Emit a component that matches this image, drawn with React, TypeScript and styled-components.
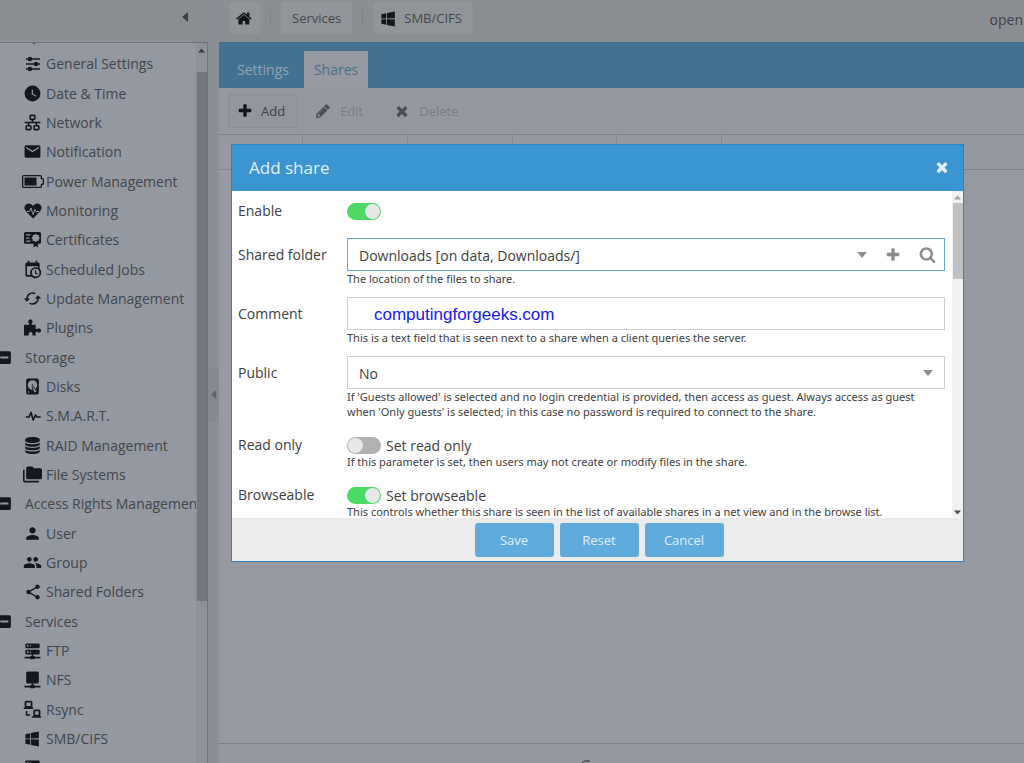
import React from 'react';
import styled, { createGlobalStyle, css } from 'styled-components';
import { MdPerson, MdPeople, MdShare } from 'react-icons/md';

const GlobalStyle = createGlobalStyle`
  *, *::before, *::after { box-sizing: border-box; }
  html, body, #root { height: 100%; }
  body {
    margin: 0;
    overflow: hidden;
    font-family: 'Open Sans', 'Noto Sans', sans-serif;
    font-size: 14px;
    color: #404040;
    background: #8b8f93;
  }
  button, input, select { font: inherit; color: inherit; margin: 0; }
  svg { display: block; flex: none; }
`;

/* ---------- icons ---------- */

const paths = {
  clock:
    'M12,2A10,10 0 0,0 2,12A10,10 0 0,0 12,22A10,10 0 0,0 22,12A10,10 0 0,0 12,2M16.2,16.2L11,13V7H12.5V12.2L17,14.9L16.2,16.2Z',
  lan: 'M10,2C8.89,2 8,2.89 8,4V7C8,8.11 8.89,9 10,9H11V11H2V13H6V15H5C3.89,15 3,15.89 3,17V20C3,21.11 3.89,22 5,22H9C10.11,22 11,21.11 11,20V17C11,15.89 10.11,15 9,15H8V13H16V15H15C13.89,15 13,15.89 13,17V20C13,21.11 13.89,22 15,22H19C20.11,22 21,21.11 21,20V17C21,15.89 20.11,15 19,15H18V13H22V11H13V9H14C15.11,9 16,8.11 16,7V4C16,2.89 15.11,2 14,2H10M10,4H14V7H10V4M5,17H9V20H5V17M15,17H19V20H15V17Z',
  email:
    'M20,8L12,13L4,8V6L12,11L20,6M20,4H4C2.89,4 2,4.89 2,6V18A2,2 0 0,0 4,20H20A2,2 0 0,0 22,18V6C22,4.89 21.1,4 20,4Z',
  calendar:
    'M15,13H16.5V15.82L18.94,17.23L18.19,18.53L15,16.69V13M19,8H5V19H9.67C9.24,18.09 9,17.07 9,16A7,7 0 0,1 16,9C17.07,9 18.09,9.24 19,9.67V8M5,21C3.89,21 3,20.1 3,19V5C3,3.89 3.89,3 5,3H6V1H8V3H16V1H18V3H19A2,2 0 0,1 21,5V11.1C22.24,12.36 23,14.09 23,16A7,7 0 0,1 16,23C14.09,23 12.36,22.24 11.1,21H5M16,11.15A4.85,4.85 0 0,0 11.15,16C11.15,18.68 13.32,20.85 16,20.85A4.85,4.85 0 0,0 20.85,16C20.85,13.32 18.68,11.15 16,11.15Z',
  cached:
    'M19,8L15,12H18A6,6 0 0,1 12,18C11,18 10.03,17.75 9.2,17.3L7.74,18.76C8.97,19.54 10.43,20 12,20A8,8 0 0,0 20,12H23M6,12A6,6 0 0,1 12,6C13,6 13.97,6.25 14.8,6.7L16.26,5.24C15.03,4.46 13.57,4 12,4A8,8 0 0,0 4,12H1L5,16L9,12',
  harddisk:
    'M6,2H18A2,2 0 0,1 20,4V20A2,2 0 0,1 18,22H6A2,2 0 0,1 4,20V4A2,2 0 0,1 6,2M12,4A6,6 0 0,0 6,10C6,13.31 8.69,16 12.1,16L11.22,13.77C10.95,13.29 11.11,12.68 11.59,12.4L12.45,11.9C12.93,11.63 13.54,11.79 13.82,12.27L15.74,14.69C17.12,13.59 18,11.9 18,10A6,6 0 0,0 12,4M12,9A1,1 0 0,1 13,10A1,1 0 0,1 12,11A1,1 0 0,1 11,10A1,1 0 0,1 12,9M7,18A1,1 0 0,0 6,19A1,1 0 0,0 7,20A1,1 0 0,0 8,19A1,1 0 0,0 7,18M12.09,13.27L14.58,19.58L17.17,18.08L12.95,12.77L12.09,13.27Z',
  folders:
    'M22,4H14L12,2H6A2,2 0 0,0 4,4V16A2,2 0 0,0 6,18H22A2,2 0 0,0 24,16V6A2,2 0 0,0 22,4M2,6H0V11H0V20A2,2 0 0,0 2,22H20V20H2V6Z',
  server:
    'M13,19H14A1,1 0 0,1 15,20H22V22H15A1,1 0 0,1 14,23H10A1,1 0 0,1 9,22H2V20H9A1,1 0 0,1 10,19H11V17H4A1,1 0 0,1 3,16V12A1,1 0 0,1 4,11H20A1,1 0 0,1 21,12V16A1,1 0 0,1 20,17H13V19M4,3H20A1,1 0 0,1 21,4V8A1,1 0 0,1 20,9H4A1,1 0 0,1 3,8V4A1,1 0 0,1 4,3M9,7H10V5H9V7M9,15H10V13H9V15M5,5V7H7V5H5M5,13V15H7V13H5Z',
  nfs: 'M6,2H18Q20,2 20,4V15Q20,17 18,17H13V19H14A1,1 0 0,1 15,20H22V22H15A1,1 0 0,1 14,23H10A1,1 0 0,1 9,22H2V20H9A1,1 0 0,1 10,19H11V17H6Q4,17 4,15V4Q4,2 6,2Z',
  windows:
    'M3,12V6.75L9,5.43V11.91L3,12M20,3V11.75L10,11.9V5.21L20,3M3,13L9,13.09V19.9L3,18.75V13M20,13.25V22L10,20.09V13.1L20,13.25Z',
  minusBox:
    'M19,3H5A2,2 0 0,0 3,5V19A2,2 0 0,0 5,21H19A2,2 0 0,0 21,19V5A2,2 0 0,0 19,3M17.5,13.5H6V10.5H17.5V13.5Z',
  rsync:
    'M4,1H10A2,2 0 0,1 12,3V8A1,1 0 0,1 11,9.5H13V11.5H1V9.5H3A2,2 0 0,1 2,8V3A2,2 0 0,1 4,1M4.3,3.3V7.5H9.7V3.3H4.3M15,12H20A2,2 0 0,1 22,14V18.5A2,2 0 0,1 21,20.5H23V22.5H11V20.5H14A2,2 0 0,1 13,18.5V14A2,2 0 0,1 15,12M15.3,14.3V18.5H19.7V14.3H15.3M3.5,14H5.5V18H9V20H3.5Z',
};

const faPaths = {
  home: 'M1408 992v480q0 26-19 45t-45 19h-384v-384h-256v384h-384q-26 0-45-19t-19-45v-480q0-1 .5-3t.5-3l575-474 575 474q1 2 1 6zm223-69l-62 74q-8 9-21 11h-3q-13 0-21-7l-692-577-692 577q-12 8-24 7-13-2-21-11l-62-74q-8-10-7-23.5t11-21.5l719-599q32-26 76-26t76 26l244 204v-195q0-14 9-23t23-9h192q14 0 23 9t9 23v408l219 182q10 8 11 21.5t-7 23.5z',
  times:
    'M1490 1322q0 40-28 68l-136 136q-28 28-68 28t-68-28l-294-294-294 294q-28 28-68 28t-68-28l-136-136q-28-28-28-68t28-68l294-294-294-294q-28-28-28-68t28-68l136-136q28-28 68-28t68 28l294 294 294-294q28-28 68-28t68 28l136 136q28 28 28 68t-28 68l-294 294 294 294q28 28 28 68z',
  plus: 'M1600 736v192q0 40-28 68t-68 28h-416v416q0 40-28 68t-68 28h-192q-40 0-68-28t-28-68v-416h-416q-40 0-68-28t-28-68v-192q0-40 28-68t68-28h416v-416q0-40 28-68t68-28h192q40 0 68 28t28 68v416h416q40 0 68 28t28 68z',
  pencil:
    'M491 1536l91-91-235-235-91 91v107h128v128h107zm523-928q0-22-22-22-10 0-17 7l-542 542q-7 7-7 17 0 22 22 22 10 0 17-7l542-542q7-7 7-17zm-54-192l416 416-832 832h-416v-416zm683 96q0 53-37 90l-166 166-416-416 166-165q36-38 90-38 53 0 91 38l235 234q37 39 37 91z',
  search:
    'M1216 832q0-185-131.5-316.5t-316.5-131.5-316.5 131.5-131.5 316.5 131.5 316.5 316.5 131.5 316.5-131.5 131.5-316.5zm512 832q0 52-38 90t-90 38q-54 0-90-38l-343-342q-179 124-399 124-143 0-273.5-55.5t-225-150-150-225-55.5-273.5 55.5-273.5 150-225 225-150 273.5-55.5 273.5 55.5 225 150 150 225 55.5 273.5q0 220-124 399l343 343q37 37 37 90z',
  database:
    'M896 768q237 0 443-43t325-127v170q0 69-103 128t-280 93.5-385 34.5-385-34.5-280-93.5-103-128v-170q119 84 325 127t443 43zm0 768q237 0 443-43t325-127v170q0 69-103 128t-280 93.5-385 34.5-385-34.5-280-93.5-103-128v-170q119 84 325 127t443 43zm0-384q237 0 443-43t325-127v170q0 69-103 128t-280 93.5-385 34.5-385-34.5-280-93.5-103-128v-170q119 84 325 127t443 43zm0-1152q208 0 385 34.5t280 93.5 103 128v128q0 69-103 128t-280 93.5-385 34.5-385-34.5-280-93.5-103-128v-128q0-69 103-128t280-93.5 385-34.5z',
};

const Mdi = ({ name, size = 19 }: { name: keyof typeof paths; size?: number }) => (
  <svg width={size} height={size} viewBox="0 0 24 24" fill="currentColor" fillRule="evenodd" aria-hidden="true">
    <path d={paths[name]} />
  </svg>
);

const Fa = ({ name, size = 16 }: { name: keyof typeof faPaths; size?: number }) => (
  <svg width={size} height={size} viewBox="0 0 1792 1792" fill="currentColor" aria-hidden="true">
    <path d={faPaths[name]} />
  </svg>
);

const Sliders = () => (
  <svg width="16" height="16" viewBox="0 0 16 16" fill="currentColor" aria-hidden="true">
    <path d="M1 2.300h14v1.400H1zM1 7.300h14v1.400H1zM1 12.300h14v1.400H1z" />
    <circle cx="5" cy="3" r="2.200" />
    <circle cx="11" cy="8" r="2.200" />
    <circle cx="5" cy="13" r="2.200" />
  </svg>
);

const Battery = () => (
  <svg width="22" height="13" viewBox="0 0 22 13" fill="currentColor" aria-hidden="true">
    <path
      fillRule="evenodd"
      d="M1.500 0h17Q20 0 20 1.500V3h.5Q22 3 22 4.500v4Q22 10 20.500 10H20v1.500Q20 13 18.500 13h-17Q0 13 0 11.500v-10Q0 0 1.500 0zM1.300 1.300v10.400h17.400V8.700h2V4.300h-2v-3z"
    />
    <path d="M2.500 2.500h12v8h-12z" />
  </svg>
);

const HeartBeat = () => (
  <svg width="18" height="16" viewBox="0 0 18 16" aria-hidden="true">
    <path
      fill="currentColor"
      d="M9 15.500 2 8.500Q-.5 5.500 1 2.700 2.500.5 5 .6 7.500.8 9 3 10.500.8 13 .6q2.500-.1 4 2.100 1.500 2.800-1 5.800z"
    />
    <path d="M3 8.500h2.500L7 5l2 6.500 2-5 1 2h3" fill="none" stroke="#9498a0" strokeWidth="1" />
  </svg>
);

const Certificate = () => (
  <svg width="17" height="17" viewBox="0 0 16 16" aria-hidden="true">
    <path
      fill="currentColor"
      fillRule="evenodd"
      d="M1.500 1h13Q16 1 16 2.500v8q0 1.500-1.500 1.500H13v3.500L11 14l-2 1.500V12H1.500Q0 12 0 10.500v-8Q0 1 1.500 1zM2 3v1.200h4V3zm0 3v1.200h3V6zm0 3v1.200h4V9zM11 2.500l1.200 1.200 1.800.1-.1 1.700L15 6.600l-1.200 1.200-.1 1.600-1.600-.1L11 10.500 9.800 9.300l-1.700.1.100-1.700L7 6.600l1.200-1.200V3.700l1.700.1z"
    />
  </svg>
);

const Puzzle = () => (
  <svg width="17" height="17" viewBox="0 0 16 16" fill="currentColor" aria-hidden="true">
    <path d="M0 5.500h4.700V4a2 2 0 1 1 2.600 0v1.500H11v4h1.500a2 2 0 1 1 0 2.600H11v3.400H8v-1.500a1.800 1.800 0 0 0-3.600 0v1.500H0z" />
  </svg>
);

const Pulse = () => (
  <svg width="16" height="16" viewBox="0 0 16 16" aria-hidden="true">
    <path
      d="M1.500 9h2.500l2-4.500L8.200 12l2.300-5 1.500 2h3"
      fill="none"
      stroke="currentColor"
      strokeWidth="1.700"
      strokeLinejoin="round"
      strokeLinecap="round"
    />
  </svg>
);

const Caret = ({ dir, size = 10 }: { dir: 'up' | 'down' | 'left'; size?: number }) => {
  const d = { up: 'M0 8 5 2l5 6z', down: 'M0 2h10L5 8z', left: 'M8 0v10L2 5z' }[dir];
  return (
    <svg width={size} height={size} viewBox="0 0 10 10" fill="currentColor" aria-hidden="true">
      <path d={d} />
    </svg>
  );
};

/* ---------- page frame ---------- */

const Page = styled.div`
  display: grid;
  grid-template-columns: 208px 11px minmax(0, 1fr);
  height: 100vh;
  overflow: hidden;
`;

const Sidebar = styled.nav`
  display: flex;
  flex-direction: column;
  min-height: 0;
`;

const SidebarHead = styled.div`
  flex: none;
  display: flex;
  justify-content: flex-end;
  align-items: center;
  height: 42px;
  padding: 0 18px 8px 0;
  background: #8b8f93;
`;

const IconButton = styled.button`
  display: flex;
  align-items: center;
  justify-content: center;
  padding: 0;
  border: 0;
  background: none;
`;

const TreePanel = styled.div`
  flex: 1;
  display: flex;
  min-height: 0;
  border-top: 1px solid #70757a;
  border-right: 1px solid #66777e;
  background: #9498a0;
`;

const TreeClip = styled.div`
  flex: 1;
  min-width: 0;
  overflow: hidden;
`;

const Tree = styled.ul`
  margin: -23px 0 0;
  padding: 0;
  list-style: none;
`;

const TreeItem = styled.li`
  height: 29px;
  &:nth-child(3n) { height: 30px; }
`;

const TreeLink = styled.a<{ $group?: boolean }>`
  display: flex;
  align-items: center;
  height: 100%;
  padding-left: ${p => (p.$group ? 0 : 22)}px;
  color: #42464c;
  text-decoration: none;
  white-space: nowrap;
`;

const TreeIcon = styled.span<{ $group?: boolean }>`
  flex: none;
  display: flex;
  justify-content: ${p => (p.$group ? 'flex-end' : 'center')};
  width: ${p => (p.$group ? 13 : 21)}px;
  margin-right: ${p => (p.$group ? 12 : 3)}px;
  color: #14181c;
`;

const Track = styled.div<{ $dim?: boolean }>`
  flex: none;
  display: flex;
  flex-direction: column;
  align-items: center;
  width: 11px;
  background: ${p => (p.$dim ? '#8e9298' : '#f1f1f1')};
  color: ${p => (p.$dim ? '#363a3f' : '#505050')};
`;

const TrackEnd = styled.span<{ $tall?: boolean; $idle?: boolean }>`
  flex: none;
  display: flex;
  align-items: center;
  height: ${p => (p.$tall ? 29 : 12)}px;
  padding-bottom: ${p => (p.$tall ? 14 : 0)}px;
  ${p => p.$idle && 'color: #a3a3a3;'}
`;

const Thumb = styled.span<{ $dim?: boolean }>`
  flex: none;
  align-self: stretch;
  height: ${p => (p.$dim ? 529 : 76)}px;
  margin-left: 1px;
  background: ${p => (p.$dim ? '#73787e' : '#c1c1c1')};
`;

const Spacer = styled.span`
  flex: 1;
`;

const Splitter = styled.div`
  display: flex;
  align-items: center;
  background: #8b8f95;
`;

const SplitHandle = styled(IconButton)`
  width: 11px;
  height: 54px;
  margin-top: 26px;
  background: #858a8f;
  color: #5f646a;
`;

const Main = styled.main`
  display: flex;
  flex-direction: column;
  min-width: 0;
  min-height: 0;
`;

const Crumbs = styled.header`
  flex: none;
  display: flex;
  align-items: center;
  gap: 10px;
  height: 42px;
  padding: 0 1px 6px 10px;
  background: #8b8f93;
  font-size: 13px;
`;

const Crumb = styled.button<{ $icon?: boolean }>`
  display: flex;
  align-items: center;
  gap: 6px;
  height: 32px;
  padding: 0 11px 0 ${p => (p.$icon ? 6 : 11)}px;
  border: 0;
  border-radius: 3px;
  background: #919599;
  color: #44484c;
  svg { color: #14181c; }
`;

const HomeCrumb = styled(Crumb)`
  padding: 0 7px;
`;

const CrumbRule = styled.span`
  width: 1px;
  height: 17px;
  background: #7f8387;
`;

const Brand = styled.span`
  margin-left: auto;
  font-size: 14px;
  line-height: 20px;
  padding-top: 4px;
  color: #3c4044;
`;

const Tabs = styled.div`
  flex: none;
  display: flex;
  align-items: flex-end;
  height: 46px;
  padding-left: 9px;
  background: #457190;
`;

const Tab = styled.button<{ $on?: boolean }>`
  height: 37px;
  margin-right: ${p => (p.$on ? 0 : 6)}px;
  padding: 0 ${p => (p.$on ? 10 : 9)}px;
  border: 0;
  background: ${p => (p.$on ? '#9699a1' : 'transparent')};
  color: ${p => (p.$on ? '#4a7088' : '#8fa4b6')};
`;

const Toolbar = styled.div`
  flex: none;
  display: flex;
  align-items: center;
  gap: 6px;
  height: 47px;
  padding: 0 9px;
  border-bottom: 1px solid #7f8389;
  background: #9598a0;
`;

const ToolButton = styled.button`
  display: flex;
  align-items: center;
  gap: 8px;
  height: 34px;
  padding: 0 12px 0 8px;
  border: 1px solid #8b8f95;
  border-radius: 3px;
  background: #92959c;
  font-size: 13px;
  color: #3e4246;
  svg { color: #14181c; }
  &:disabled {
    gap: 9px;
    padding: 0 13px 0 10px;
    border-color: transparent;
    background: #94979f;
    color: #7a7e84;
    svg { color: #4a4e53; }
  }
`;

const Grid = styled.table`
  flex: none;
  width: 100%;
  border-collapse: collapse;
  table-layout: fixed;
  background: #9598a0;
`;

const GridHead = styled.th<{ $w?: number }>`
  width: ${p => (p.$w ? `${p.$w}px` : 'auto')};
  height: 34px;
  padding: 0;
  border-right: 1px solid #82868c;
  border-bottom: 1px solid #82868c;
  &:last-child { border-right: 0; }
`;

const GridBody = styled.div`
  flex: 1;
  background: #9699a1;
`;

const Paging = styled.footer`
  flex: none;
  display: flex;
  align-items: flex-start;
  height: 20px;
  overflow: hidden;
  padding: 13px 0 0 359px;
  border-top: 1px solid #7c8086;
  background: #9698a0;
  color: #4a4e53;
`;

/* ---------- dialog ---------- */

const Overlay = styled.div`
  position: absolute;
  inset: 0;
  padding: 144px 60px 0 231px;
`;

const Dialog = styled.section`
  border: 1px solid #3085bf;
  background: #fff;
`;

const DialogHead = styled.header`
  display: flex;
  align-items: center;
  justify-content: space-between;
  height: 46px;
  padding: 0 13px 2px 17px;
  background: #3a95d0;
  color: #e4f1fa;
`;

const DialogTitle = styled.h1`
  margin: 0;
  font-size: 17px;
  font-weight: 400;
`;

const DialogBody = styled.div`
  display: flex;
  height: 327px;
  overflow: hidden;
`;

const Form = styled.form`
  flex: 1;
  min-width: 0;
  display: flex;
  flex-direction: column;
  gap: 11px;
  padding: 5px 7px 0 6px;
`;

const Row = styled.div<{ $toggle?: boolean }>`
  flex: none;
  display: grid;
  grid-template-columns: 109px minmax(0, 1fr);
  ${p =>
    p.$toggle &&
    css`
      min-height: 31px;
      padding-top: 6px;
    `}
`;

const RowLabel = styled.label<{ $toggle?: boolean }>`
  line-height: ${p => (p.$toggle ? 18 : 33)}px;
`;

const Field = styled.div`
  min-width: 0;
`;

const Box = styled.div<{ $focus?: boolean }>`
  display: flex;
  align-items: center;
  height: 33px;
  border: 1px solid ${p => (p.$focus ? '#6ba5d3' : '#cfcfcf')};
  color: #8d8d8d;
`;

const SelectInput = styled.select`
  flex: 1;
  min-width: 0;
  height: 31px;
  padding: 2px 11px 0;
  border: 0;
  outline: 0;
  appearance: none;
  background: none;
  color: #404040;
`;

const Triggers = styled.div`
  display: flex;
  align-items: center;
  gap: 18px;
  padding-right: 8px;
`;

const SingleTrigger = styled(Triggers)`
  padding-right: 11px;
`;

const TextInput = styled.input`
  flex: 1;
  min-width: 0;
  height: 31px;
  padding: 2px 26px 0;
  border: 0;
  outline: 0;
  background: none;
  font-family: 'Liberation Sans', Arial, sans-serif;
  font-size: 17px;
  color: #1420f0;
`;

const Help = styled.p`
  margin: 0;
  font-family: 'Noto Sans', 'Open Sans', sans-serif;
  font-size: 11px;
  line-height: 15px;
`;

const ToggleLabel = styled.label`
  display: flex;
  align-items: center;
  gap: 5px;
  height: 18px;
`;

const Toggle = styled.input`
  appearance: none;
  flex: none;
  width: 34px;
  height: 17px;
  padding: 1px;
  border-radius: 9px;
  background: #b1b1b1;
  &::before {
    content: '';
    display: block;
    width: 15px;
    height: 15px;
    border-radius: 50%;
    background: #e8e8e8;
  }
  &:checked { background: #4cd964; }
  &:checked::before { margin-left: auto; }
`;

const DialogFoot = styled.footer`
  display: flex;
  align-items: center;
  justify-content: center;
  gap: 6px;
  height: 43px;
  padding-left: 3px;
  background: #ebebeb;
`;

const Action = styled.button`
  width: 79px;
  height: 34px;
  border: 0;
  border-radius: 3px;
  background: #5fabde;
  font-size: 13px;
  color: #e2f0fa;
`;

/* ---------- content ---------- */

const treeRows: { text: string; icon?: React.ReactNode; group?: boolean }[] = [
  { text: 'System', group: true },
  { text: 'General Settings', icon: <Sliders /> },
  { text: 'Date & Time', icon: <Mdi name="clock" /> },
  { text: 'Network', icon: <Mdi name="lan" /> },
  { text: 'Notification', icon: <Mdi name="email" /> },
  { text: 'Power Management', icon: <Battery /> },
  { text: 'Monitoring', icon: <HeartBeat /> },
  { text: 'Certificates', icon: <Certificate /> },
  { text: 'Scheduled Jobs', icon: <Mdi name="calendar" /> },
  { text: 'Update Management', icon: <Mdi name="cached" /> },
  { text: 'Plugins', icon: <Puzzle /> },
  { text: 'Storage', group: true },
  { text: 'Disks', icon: <Mdi name="harddisk" /> },
  { text: 'S.M.A.R.T.', icon: <Pulse /> },
  { text: 'RAID Management', icon: <Fa name="database" size={17} /> },
  { text: 'File Systems', icon: <Mdi name="folders" /> },
  { text: 'Access Rights Management', group: true },
  { text: 'User', icon: <MdPerson size={19} /> },
  { text: 'Group', icon: <MdPeople size={19} /> },
  { text: 'Shared Folders', icon: <MdShare size={18} /> },
  { text: 'Services', group: true },
  { text: 'FTP', icon: <Mdi name="server" /> },
  { text: 'NFS', icon: <Mdi name="nfs" /> },
  { text: 'Rsync', icon: <Mdi name="rsync" /> },
  { text: 'SMB/CIFS', icon: <Mdi name="windows" /> },
  { text: 'SNMP', icon: <Mdi name="server" /> },
];

export default function App() {
  return (
    <>
      <GlobalStyle />
      <Page>
        <Sidebar>
          <SidebarHead>
            <IconButton aria-label="Collapse navigation"><Caret dir="left" size={10} /></IconButton>
          </SidebarHead>
          <TreePanel>
            <TreeClip>
              <Tree>
                {treeRows.map(r => (
                  <TreeItem key={r.text}>
                    <TreeLink href="#" $group={r.group}>
                      <TreeIcon $group={r.group}>{r.group ? <Mdi name="minusBox" size={17} /> : r.icon}</TreeIcon>
                      {r.text}
                    </TreeLink>
                  </TreeItem>
                ))}
              </Tree>
            </TreeClip>
            <Track $dim>
              <TrackEnd $tall><Caret dir="up" size={7} /></TrackEnd>
              <Thumb $dim />
            </Track>
          </TreePanel>
        </Sidebar>

        <Splitter>
          <SplitHandle aria-label="Toggle navigation"><Caret dir="left" size={9} /></SplitHandle>
        </Splitter>

        <Main>
          <Crumbs>
            <HomeCrumb aria-label="Home"><Fa name="home" size={17} /></HomeCrumb>
            <CrumbRule />
            <Crumb>Services</Crumb>
            <CrumbRule />
            <Crumb $icon><Mdi name="windows" size={19} /><span>SMB/CIFS</span></Crumb>
            <Brand>open</Brand>
          </Crumbs>
          <Tabs role="tablist">
            <Tab role="tab" aria-selected={false}>Settings</Tab>
            <Tab role="tab" aria-selected $on>Shares</Tab>
          </Tabs>
          <Toolbar>
            <ToolButton><Fa name="plus" />Add</ToolButton>
            <ToolButton disabled><Fa name="pencil" />Edit</ToolButton>
            <ToolButton disabled><Fa name="times" />Delete</ToolButton>
          </Toolbar>
          <Grid aria-label="Shares">
            <thead>
              <tr>
                <GridHead $w={83} />
                <GridHead $w={105} />
                <GridHead $w={105} />
                <GridHead $w={104} />
                <GridHead $w={105} />
                <GridHead />
              </tr>
            </thead>
          </Grid>
          <GridBody />
          <Paging>
            <IconButton aria-label="Refresh"><Mdi name="cached" size={18} /></IconButton>
          </Paging>
        </Main>
      </Page>

      <Overlay>
        <Dialog role="dialog" aria-labelledby="dialog-title">
          <DialogHead>
            <DialogTitle id="dialog-title">Add share</DialogTitle>
            <IconButton aria-label="Close"><Fa name="times" size={16} /></IconButton>
          </DialogHead>
          <DialogBody>
            <Form>
              <Row $toggle>
                <RowLabel $toggle htmlFor="enable">Enable</RowLabel>
                <Field>
                  <ToggleLabel><Toggle type="checkbox" id="enable" defaultChecked /></ToggleLabel>
                </Field>
              </Row>
              <Row>
                <RowLabel htmlFor="folder">Shared folder</RowLabel>
                <Field>
                  <Box $focus>
                    <SelectInput id="folder"><option>Downloads [on data, Downloads/]</option></SelectInput>
                    <Triggers>
                      <Caret dir="down" />
                      <IconButton type="button" aria-label="Create"><Fa name="plus" /></IconButton>
                      <IconButton type="button" aria-label="Search"><Fa name="search" size={17} /></IconButton>
                    </Triggers>
                  </Box>
                  <Help>The location of the files to share.</Help>
                </Field>
              </Row>
              <Row>
                <RowLabel htmlFor="comment">Comment</RowLabel>
                <Field>
                  <Box><TextInput id="comment" defaultValue="computingforgeeks.com" /></Box>
                  <Help>This is a text field that is seen next to a share when a client queries the server.</Help>
                </Field>
              </Row>
              <Row>
                <RowLabel htmlFor="public">Public</RowLabel>
                <Field>
                  <Box>
                    <SelectInput id="public"><option>No</option></SelectInput>
                    <SingleTrigger><Caret dir="down" /></SingleTrigger>
                  </Box>
                  <Help>
                    If 'Guests allowed' is selected and no login credential is provided, then access as guest. Always
                    access as guest
                    <br />
                    when 'Only guests' is selected; in this case no password is required to connect to the share.
                  </Help>
                </Field>
              </Row>
              <Row $toggle>
                <RowLabel $toggle htmlFor="readonly">Read only</RowLabel>
                <Field>
                  <ToggleLabel><Toggle type="checkbox" id="readonly" />Set read only</ToggleLabel>
                  <Help>If this parameter is set, then users may not create or modify files in the share.</Help>
                </Field>
              </Row>
              <Row $toggle>
                <RowLabel $toggle htmlFor="browseable">Browseable</RowLabel>
                <Field>
                  <ToggleLabel><Toggle type="checkbox" id="browseable" defaultChecked />Set browseable</ToggleLabel>
                  <Help>This controls whether this share is seen in the list of available shares in a net view and in the browse list.</Help>
                </Field>
              </Row>
            </Form>
            <Track>
              <TrackEnd $idle><Caret dir="up" size={7} /></TrackEnd>
              <Thumb />
              <Spacer />
              <TrackEnd><Caret dir="down" size={7} /></TrackEnd>
            </Track>
          </DialogBody>
          <DialogFoot>
            <Action>Save</Action>
            <Action>Reset</Action>
            <Action>Cancel</Action>
          </DialogFoot>
        </Dialog>
      </Overlay>
    </>
  );
}
